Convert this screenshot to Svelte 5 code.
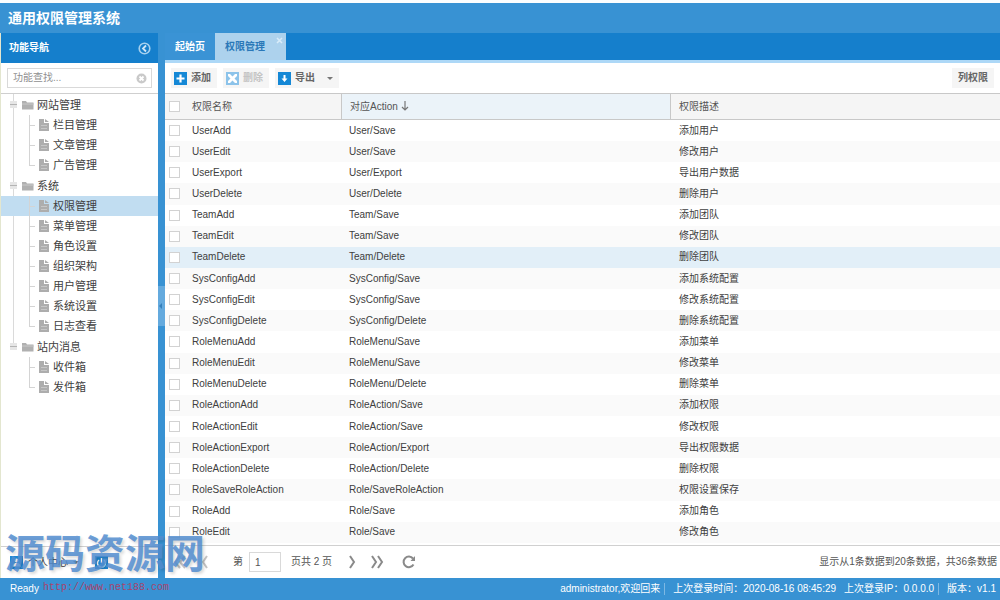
<script>
  let groups = [
    { name: '网站管理', items: ['栏目管理', '文章管理', '广告管理'] },
    { name: '系统', items: ['权限管理', '菜单管理', '角色设置', '组织架构', '用户管理', '系统设置', '日志查看'] },
    { name: '站内消息', items: ['收件箱', '发件箱'] }
  ]
  let current = '权限管理'
  let search = ''
  let page = '1'

  let rows = [
    ['UserAdd', 'User/Save', '添加用户'],
    ['UserEdit', 'User/Save', '修改用户'],
    ['UserExport', 'User/Export', '导出用户数据'],
    ['UserDelete', 'User/Delete', '删除用户'],
    ['TeamAdd', 'Team/Save', '添加团队'],
    ['TeamEdit', 'Team/Save', '修改团队'],
    ['TeamDelete', 'Team/Delete', '删除团队'],
    ['SysConfigAdd', 'SysConfig/Save', '添加系统配置'],
    ['SysConfigEdit', 'SysConfig/Save', '修改系统配置'],
    ['SysConfigDelete', 'SysConfig/Delete', '删除系统配置'],
    ['RoleMenuAdd', 'RoleMenu/Save', '添加菜单'],
    ['RoleMenuEdit', 'RoleMenu/Save', '修改菜单'],
    ['RoleMenuDelete', 'RoleMenu/Delete', '删除菜单'],
    ['RoleActionAdd', 'RoleAction/Save', '添加权限'],
    ['RoleActionEdit', 'RoleAction/Save', '修改权限'],
    ['RoleActionExport', 'RoleAction/Export', '导出权限数据'],
    ['RoleActionDelete', 'RoleAction/Delete', '删除权限'],
    ['RoleSaveRoleAction', 'Role/SaveRoleAction', '权限设置保存'],
    ['RoleAdd', 'Role/Save', '添加角色'],
    ['RoleEdit', 'Role/Save', '修改角色']
  ]
  let active = 'TeamDelete'
</script>

<div class="app">
  <header><h1>通用权限管理系统</h1></header>

  <div class="body">
    <aside>
      <div class="panel-head">
        <h2>功能导航</h2>
        <button class="plain" aria-label="收起">
          <svg width="13" height="13" viewBox="0 0 13 13">
            <circle cx="6.5" cy="6.5" r="5.3" fill="none" stroke="#a5d0ee" stroke-width="1.6" />
            <path d="M8 3.5 5 6.5l3 3" fill="none" stroke="#cfe6f6" stroke-width="1.8" />
          </svg>
        </button>
      </div>

      <div class="search-row">
        <div class="search">
          <input type="text" placeholder="功能查找..." aria-label="功能查找" bind:value={search} />
          <button class="plain" aria-label="清除" on:click={() => (search = '')}>
            <svg width="11" height="11" viewBox="0 0 11 11">
              <circle cx="5.5" cy="5.5" r="5" fill="#c9c9c9" />
              <path d="M3.5 3.5l4 4m0-4l-4 4" stroke="#fff" stroke-width="1.8" />
            </svg>
          </button>
        </div>
      </div>

      <ul class="tree">
        {#each groups as group}
          <li class="group">
            <div class="group-name">
              <svg class="knob" width="9" height="9" viewBox="0 0 9 9">
                <path d="M1 1h7v7H1z" fill="#e6e6e6" />
                <path d="M1 4.5h7" stroke="#b4b4b4" />
              </svg>
              <svg width="12" height="10" viewBox="0 0 12 10">
                <path d="M0 1h4l1 1.5h6.500V9.500H0z" fill="#b0b0b0" />
                <path d="M0 4h12" stroke="#c9c9c9" />
              </svg>
              <span>{group.name}</span>
            </div>
            <ul>
              {#each group.items as item}
                <li class="leaf" class:selected={item == current}>
                  <button on:click={() => (current = item)}>
                    <svg width="10" height="12" viewBox="0 0 10 12">
                      <path d="M0 0h5v4h5v8H0z" fill="#adadad" />
                      <path d="M6 0l4 3H6z" fill="#adadad" />
                      <path d="M2 6.5h6M2 9.5h6" stroke="#c6c6c6" />
                    </svg>
                    {item}
                  </button>
                </li>
              {/each}
            </ul>
          </li>
        {/each}
      </ul>

      <div class="side-foot">
        <button class="plain foot-btn">
          <svg width="13" height="13" viewBox="0 0 13 13">
            <path d="M0 0h13v13H0z" fill="#1e8ad6" />
            <circle cx="6.5" cy="4.5" r="2" fill="#fff" />
            <path d="M2.5 10.5c0-5 8-5 8 0z" fill="#fff" />
          </svg>
          个人中心 <span class="caret"></span>
        </button>
        <button class="plain" aria-label="退出">
          <svg width="13" height="13" viewBox="0 0 13 13">
            <path d="M0 0h13v13H0z" fill="#1e8ad6" />
            <path d="M6.5 2v5M4 4a4 4 0 1 0 5 0" fill="none" stroke="#fff" stroke-width="1.4" />
          </svg>
        </button>
      </div>
    </aside>

    <div class="splitter">
      <button aria-label="折叠">
        <svg width="5" height="6" viewBox="0 0 5 6"><path d="M4 0v6L1 3z" fill="#3580bb" /></svg>
      </button>
    </div>

    <main>
      <nav class="tabs">
        <button class="tab">起始页</button>
        <button class="tab on">
          权限管理
          <svg class="close" width="7" height="7" viewBox="0 0 7 7">
            <path d="M1 1l5 5m0-5l-5 5" stroke="#d9ecf9" stroke-width="1.6" />
          </svg>
        </button>
      </nav>

      <div class="toolbar">
        <button class="tool">
          <svg width="13" height="13" viewBox="0 0 13 13">
            <path d="M0 0h13v13H0z" fill="#1588d6" />
            <path d="M6.5 2.5v8m-4-4h8" stroke="#fff" stroke-width="2.2" />
          </svg>
          添加
        </button>
        <button class="tool" disabled>
          <svg width="13" height="13" viewBox="0 0 13 13">
            <path d="M0 0h13v13H0z" fill="#8cc3ea" />
            <path d="M2 2l2 0 2.500 2.500L9 2h2v2L8.500 6.500 11 9v2H9L6.500 8.500 4 11H2V9l2.500-2.500L2 4z" fill="#fff" />
          </svg>
          删除
        </button>
        <button class="tool">
          <svg width="13" height="13" viewBox="0 0 13 13">
            <path d="M0 0h13v13H0z" fill="#1588d6" />
            <path d="M5.5 3h2v3.5h2l-3 3.5-3-3.5h2z" fill="#fff" />
          </svg>
          导出
          <span class="caret wide"></span>
        </button>
        <button class="tool last">列权限</button>
      </div>

      <div class="grid">
        <table>
          <thead>
            <tr>
              <th class="check"><input type="checkbox" aria-label="全选" /></th>
              <th class="name">权限名称</th>
              <th class="action">
                对应Action
                <svg width="8" height="10" viewBox="0 0 8 10">
                  <path d="M4 0v9M1 6l3 3 3-3" fill="none" stroke="#777" stroke-width="1.2" />
                </svg>
              </th>
              <th>权限描述</th>
            </tr>
          </thead>
          <tbody>
            {#each rows as row}
              <tr class:active={row[0] == active}>
                <td class="check"><input type="checkbox" aria-label={row[0]} /></td>
                <td>{row[0]}</td>
                <td>{row[1]}</td>
                <td>{row[2]}</td>
              </tr>
            {/each}
          </tbody>
        </table>
      </div>

      <div class="pager">
        <button class="plain faded" aria-label="第一页">
          <svg width="14" height="14" viewBox="0 0 14 14"><path d="M7 1 2 7l5 6M12 1 7 7l5 6" /></svg>
        </button>
        <button class="plain faded" aria-label="上一页">
          <svg width="8" height="14" viewBox="0 0 8 14"><path d="M6 1 2 7l4 6" /></svg>
        </button>
        <label for="page">第</label>
        <input id="page" type="text" bind:value={page} />
        <span class="total">页共 2 页</span>
        <button class="plain" aria-label="下一页">
          <svg width="8" height="14" viewBox="0 0 8 14"><path d="M2 1l4 6-4 6" /></svg>
        </button>
        <button class="plain" aria-label="最后一页">
          <svg width="14" height="14" viewBox="0 0 14 14"><path d="M2 1l4 6-4 6M8 1l4 6-4 6" /></svg>
        </button>
        <button class="plain refresh" aria-label="刷新">
          <svg width="14" height="14" viewBox="0 0 14 14">
            <path d="M11.5 9.5A5.3 5.3 0 1 1 11 3.5" />
            <path class="tip" d="M13 1v5H8.5z" />
          </svg>
        </button>
        <span class="summary">显示从1条数据到20条数据，共36条数据</span>
      </div>
    </main>
  </div>

  <footer>
    <span class="ready">Ready</span>
    <span class="user">administrator,欢迎回来</span>
    <span>上次登录时间：2020-08-16 08:45:29</span>
    <span class="ip">上次登录IP：0.0.0.0</span>
    <span>版本：v1.1</span>
  </footer>

  <div class="watermark">
    <strong>源码资源网</strong>
    <a href="http://www.net188.com">http://www.net188.com</a>
  </div>
</div>

<style>
  :global(body) {
    margin: 0;
  }

  .app {
    position: relative;
    display: flex;
    flex-direction: column;
    min-height: 100vh;
    box-sizing: border-box;
    border-top: 3px solid #fbfdfe;
    background: #fff;
    color: #404040;
    font: 10px/14px "Liberation Sans", "Noto Sans CJK SC", sans-serif;
    overflow: hidden;
  }

  button,
  input {
    font: inherit;
    color: inherit;
    box-sizing: border-box;
  }

  button {
    border: 0;
    padding: 0;
    background: none;
    cursor: pointer;
  }

  .plain {
    display: flex;
    align-items: center;
  }

  header {
    display: flex;
    align-items: center;
    height: 30px;
    padding-left: 8px;
    background: #3892d3;
  }

  h1,
  h2 {
    margin: 0;
    color: #fff;
  }

  h1 {
    font-size: 14px;
    line-height: 20px;
  }

  h2 {
    font-size: 10px;
  }

  .body {
    flex: 1;
    display: flex;
  }

  aside {
    display: flex;
    flex-direction: column;
    width: 158px;
    box-sizing: border-box;
    border-left: 1px solid #e3e6cf;
  }

  .panel-head {
    display: flex;
    align-items: center;
    justify-content: space-between;
    height: 30px;
    padding: 0 7px 0 8px;
    background: #157fcc;
  }

  .search-row {
    padding: 5px 6px;
    border-bottom: 1px solid #cfcfcf;
  }

  .search {
    display: flex;
    align-items: center;
    height: 20px;
    padding-right: 4px;
    box-sizing: border-box;
    border: 1px solid #d9d9d9;
  }

  .search input {
    flex: 1;
    min-width: 0;
    border: 0;
    padding: 0 5px;
    outline: none;
    background: none;
  }

  .search input::placeholder {
    color: #909090;
  }

  ul {
    list-style: none;
    margin: 0;
    padding: 0;
  }

  /* tree */
  .tree {
    flex: 1;
    font-size: 11px;
    line-height: 20px;
  }

  .group {
    background: linear-gradient(#dadada, #dadada) 12px 0 / 1px 100% no-repeat;
  }

  .group:last-child {
    background-size: 1px 10px;
  }

  .group-name {
    display: flex;
    align-items: center;
    height: 21px;
    padding-left: 8px;
  }

  .knob {
    margin-right: 4px;
  }

  .group-name span {
    margin-left: 3px;
  }

  .leaf {
    background:
      linear-gradient(#d4d4d4, #d4d4d4) 28px 0 / 1px 100% no-repeat,
      linear-gradient(#d4d4d4, #d4d4d4) 28px 10px / 6px 1px no-repeat;
  }

  .leaf:last-child {
    background-size: 1px 10px, 6px 1px;
  }

  .leaf.selected {
    background-color: #c1ddf1;
  }

  .leaf button {
    display: flex;
    align-items: center;
    gap: 4px;
    width: 100%;
    height: 20px;
    padding-left: 38px;
  }

  .side-foot {
    display: flex;
    align-items: center;
    gap: 16px;
    height: 31px;
    padding-left: 9px;
    border-top: 1px solid #d0d0d0;
  }

  .foot-btn {
    gap: 5px;
  }

  .caret {
    border: 3px solid transparent;
    border-top-color: #777;
    border-bottom: 0;
  }

  .splitter {
    display: flex;
    align-items: center;
    width: 7px;
    background: #3892d3;
  }

  .splitter button {
    width: 100%;
    height: 40px;
    background: #64aade;
  }

  .splitter svg {
    display: block;
  }

  main {
    flex: 1;
    min-width: 0;
    display: flex;
    flex-direction: column;
  }

  .tabs {
    display: flex;
    height: 27px;
    background: #157fcc;
    border-bottom: 3px solid #add8f7;
  }

  .tab {
    padding: 0 10px;
    background: #3a93d5;
    color: #fff;
    font-weight: bold;
  }

  .tab.on {
    position: relative;
    padding-right: 21px;
    background: #add2ed;
    color: #2a78b8;
  }

  .close {
    position: absolute;
    top: 4px;
    right: 3px;
  }

  .toolbar {
    display: flex;
    align-items: center;
    gap: 6px;
    padding: 5px 6px;
    border-bottom: 1px solid #c8c8c8;
  }

  .tool {
    display: flex;
    align-items: center;
    gap: 4px;
    height: 20px;
    padding: 0 6px 0 3px;
    background: #f5f5f5;
    color: #666;
    font-weight: bold;
  }

  .tool:disabled {
    color: #c4c4c4;
  }

  .tool.last {
    margin-left: auto;
    padding: 0 6px;
  }

  .wide {
    margin-left: 8px;
  }

  .grid {
    flex: 1;
    display: grid;
    padding-bottom: 2px;
  }

  table {
    width: 100%;
    height: 100%;
    table-layout: fixed;
    border-collapse: separate;
    border-spacing: 0;
  }

  th,
  td {
    height: 21px;
    padding: 0 8px;
    box-sizing: border-box;
    text-align: left;
    white-space: nowrap;
    overflow: hidden;
  }

  th {
    height: 26px;
    background: #f5f5f5;
    border-bottom: 1px solid #c8c8c8;
    color: #555;
    font-weight: normal;
  }

  .check {
    width: 19px;
    padding: 0 4px;
  }

  .check input {
    display: block;
    appearance: none;
    width: 11px;
    height: 11px;
    margin: 0;
    border: 1px solid #d2d2d2;
    background: #fff;
  }

  .name {
    width: 157px;
  }

  .action {
    width: 330px;
    border-left: 1px solid #c8c8c8;
    border-right: 1px solid #c8c8c8;
    background: #ebf3f9;
  }

  .action svg {
    vertical-align: -1px;
  }

  tbody tr:nth-child(even) td {
    background: #fafafa;
  }

  tbody tr.active td {
    background: #e2eff8;
  }

  /* paging bar */
  .pager {
    display: flex;
    align-items: center;
    height: 32px;
    padding: 0 3px 0 8px;
    border-top: 1px solid #d0d0d0;
    color: #555;
  }

  .pager button {
    margin-right: 14px;
  }

  .pager path {
    fill: none;
    stroke: #8a8a8a;
    stroke-width: 2;
  }

  .pager .tip {
    fill: #8a8a8a;
    stroke: none;
  }

  .pager .refresh {
    margin-left: 4px;
  }

  .pager .faded {
    opacity: 0.5;
  }

  .pager label {
    margin: 0 6px 0 10px;
  }

  .pager input {
    width: 32px;
    height: 20px;
    padding: 0 5px;
    border: 1px solid #d9d9d9;
  }

  .total {
    margin: 0 16px 0 10px;
  }

  .summary {
    margin-left: auto;
  }

  footer {
    display: flex;
    align-items: center;
    gap: 8px;
    height: 22px;
    padding: 0 4px 0 10px;
    background: #3892d3;
    color: #fff;
    line-height: 12px;
  }

  .ready {
    margin-right: auto;
  }

  .user,
  .ip {
    padding-right: 4px;
    border-right: 1px solid #7db8e3;
  }

  .watermark {
    position: absolute;
    left: 5px;
    bottom: 4px;
    display: flex;
    flex-direction: column;
    pointer-events: none;
  }

  .watermark strong {
    font-size: 40px;
    line-height: 40px;
    padding-bottom: 6px;
    color: rgba(82, 141, 208, 0.85);
    text-shadow: 2px 2px 3px rgba(0, 0, 0, 0.15);
  }

  .watermark a {
    margin-left: 38px;
    color: #a8446c;
    font: 10px/16px "Liberation Mono", monospace;
    text-decoration: none;
  }
</style>
